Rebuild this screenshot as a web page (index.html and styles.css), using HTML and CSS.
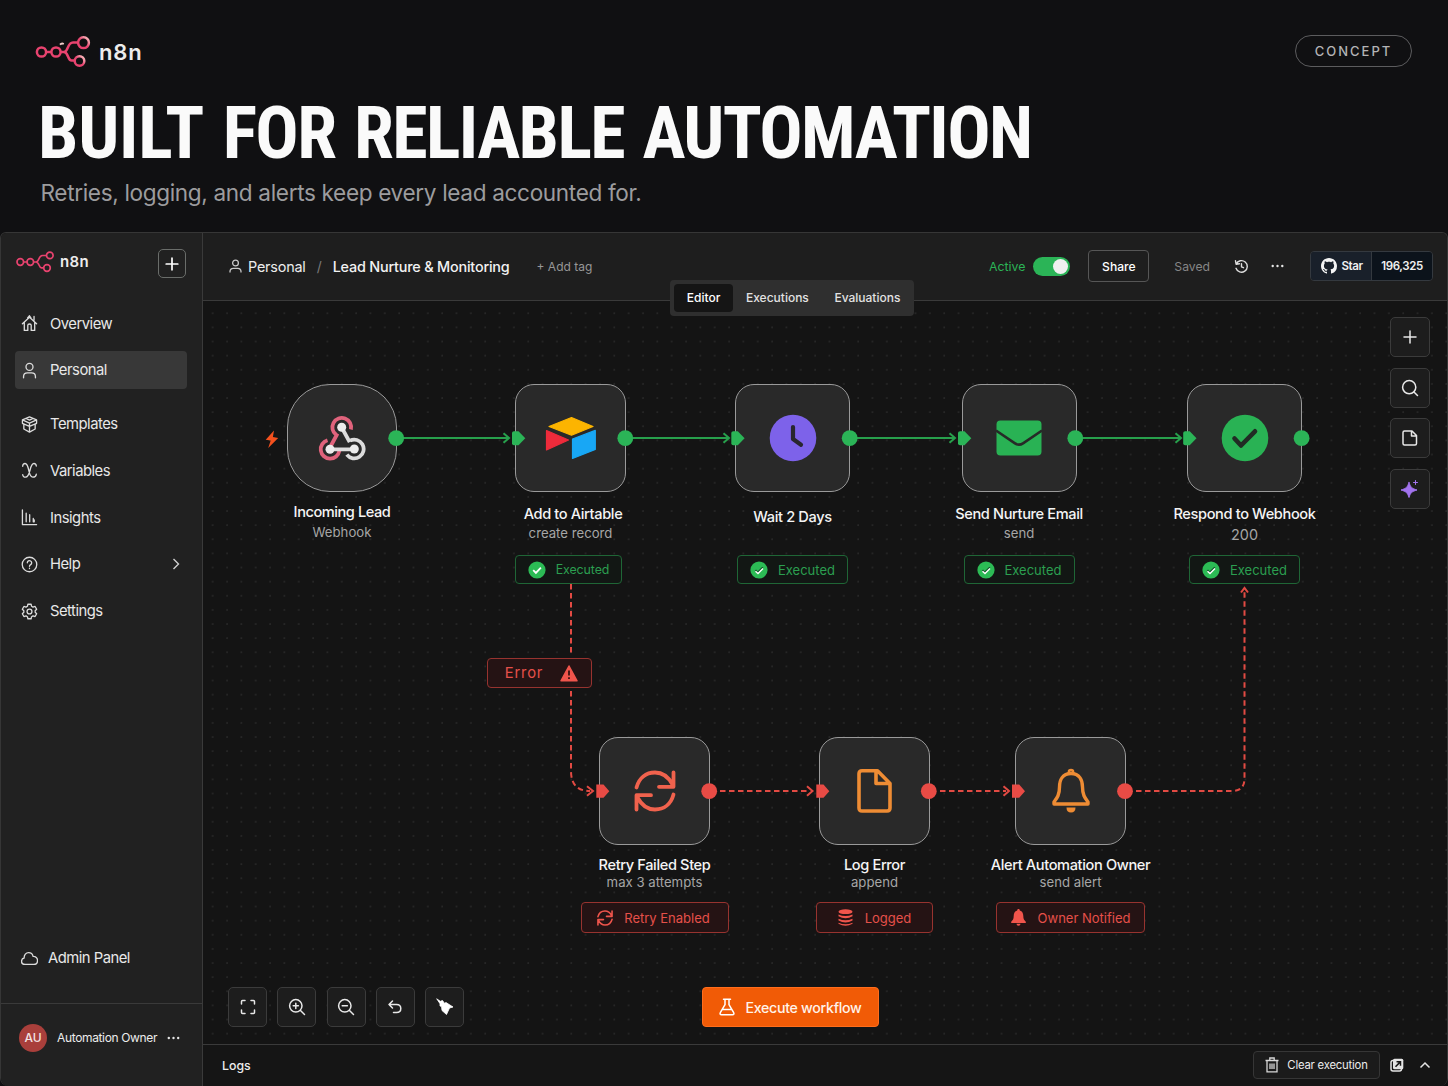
FILE: index.html
```html
<!DOCTYPE html>
<html lang="en">
<head>
    <meta charset="utf-8">
    <title>n8n - Lead Nurture &amp; Monitoring</title>
    <link rel="stylesheet" href="styles.css">
</head>
<body>
    <header class="hero">
        <div class="hero-top">
            <div class="brand brand-large">
                <svg width="58" height="32" viewBox="0 0 58 32" fill="none" stroke="#e8436f" stroke-width="2.5">
                    <defs>
                        <linearGradient id="fade" x1="0" y1="1" x2="1" y2="0">
                            <stop offset="0.5" stop-color="#e8436f"/>
                            <stop offset="1" stop-color="#ffd0cc"/>
                        </linearGradient>
                    </defs>
                    <circle cx="6.5" cy="16" r="4.6"/>
                    <circle cx="21" cy="16" r="4.6"/>
                    <path d="M11 16h5.5M25.500 16H29c4.500 0 3-9.500 9-9.500h5M29 16c4.500 0 3.500 8.500 7.500 8.500h3"/>
                    <circle cx="48.500" cy="6.700" r="5.400" stroke="url(#fade)"/>
                    <circle cx="44.500" cy="25" r="4.800" stroke="url(#fade)"/>
                    <path d="M25 8.700c1-1.200 2.500-1.400 3.800-.7" stroke="#f3cfcc" stroke-width="1.800"/>
                </svg>
                <span>n8n</span>
            </div>
            <span class="concept">CONCEPT</span>
        </div>
        <h1><span class="first-word">BUILT</span> FOR RELIABLE AUTOMATION</h1>
        <p>Retries, logging, and alerts keep every lead accounted for.</p>
    </header>

    <div class="app">
        <aside class="sidebar">
            <div class="sidebar-top">
                <div class="brand">
                    <svg width="38" height="22" viewBox="0 0 38 22" fill="none" stroke="#e8436f" stroke-width="1.700">
                        <circle cx="4.300" cy="11" r="3.300"/>
                        <circle cx="14.300" cy="11" r="3.300"/>
                        <path d="M7.600 11H11M17.600 11h2.400c3.500 0 2.200-6.500 6.500-6.500H30M20 11c3.500 0 2.500 5.800 5.500 5.800h2"/>
                        <circle cx="33.800" cy="4.400" r="3.300"/>
                        <circle cx="31" cy="17" r="3.300"/>
                    </svg>
                    <span>n8n</span>
                </div>
                <button class="add">
                    <svg width="14" height="14" viewBox="0 0 14 14" stroke="#fff" stroke-width="1.700" stroke-linecap="round"><path d="M7 1.200v11.600M1.200 7h11.600"/></svg>
                </button>
            </div>
            <nav class="menu">
                <a class="menu-item">
                    <svg class="icon" viewBox="0 0 18 18"><path d="M1.500 9.200 9 2.300l7.500 6.900M3.500 8v8.300h3.700v-5.500q0-1.300 1.800-1.300t1.800 1.300v5.500h3.700V8M13.800 5.500v-4M7 3l2-2.200L10.500 3"/></svg>
                    Overview
                </a>
                <a class="menu-item active">
                    <svg class="icon" viewBox="0 0 18 18"><circle cx="9" cy="5.200" r="3.700"/><path d="M2.700 16.800v-1.300c0-2.300 1.800-4 4.100-4h4.400c2.300 0 4.100 1.700 4.100 4v1.300"/></svg>
                    Personal
                </a>
                <a class="menu-item spaced">
                    <svg class="icon" viewBox="0 0 18 18"><path d="M9 1 1.500 4.200v3.600L3 8.600v5.200L9 17l6-3.200V8.600l1.500-.8V4.200zM1.500 4.200 9 7.500l7.500-3.300M1.500 7.800 9 11l7.500-3.200M9 7.500V17M5.300 2.600l3.700 1.700 3.700-1.700"/></svg>
                    Templates
                </a>
                <a class="menu-item">
                    <svg class="icon" viewBox="0 0 18 18"><path d="M1.800 4.500c0-1.800 1-2.900 2.500-2.900C9.300 1.600 7 16 12.500 16c1.900 0 3.400-1 3.700-3M16.200 4.200c0-1.600-1-2.600-2.500-2.600C8.700 1.600 10.500 16 4.800 16 3 16 1.800 15 1.800 13.300"/></svg>
                    Variables
                </a>
                <a class="menu-item">
                    <svg class="icon" viewBox="0 0 18 18"><path d="M1.500 1v15.500h15M5.500 4.500v9M9.200 6v7.500M13 10v3.500M14 11.500v2"/></svg>
                    Insights
                </a>
                <a class="menu-item">
                    <svg class="icon" viewBox="0 0 18 18"><circle cx="9" cy="9" r="7.700"/><path d="M6.700 7.200a2.300 2.300 0 1 1 3.500 2c-.8.5-1.200.9-1.200 1.700M9 12.900v.4"/></svg>
                    Help
                    <svg class="chevron" width="8" height="12" viewBox="0 0 8 12"><path d="m1.500 1 5 5-5 5"/></svg>
                </a>
                <a class="menu-item">
                    <svg class="icon" viewBox="0 0 18 18"><path d="M7.300 1.300h3.400l.5 2.200 1.500.9 2.200-.7 1.700 2.900L15 8.200v1.700l1.600 1.500-1.700 2.900-2.200-.7-1.500.9-.5 2.200H7.300l-.5-2.200-1.500-.9-2.200.7-1.700-2.900L3 9.900V8.200L1.400 6.600l1.700-2.900 2.200.7 1.500-.9z"/><circle cx="9" cy="9" r="2.600"/></svg>
                    Settings
                </a>
            </nav>
            <a class="menu-item admin">
                <svg class="icon" viewBox="0 0 18 18"><path d="M4.300 15.300C2.200 15.300.6 13.900.6 12S1.900 8.700 3.300 8.500C3.200 5 5.300 2.800 8 2.800c2.500 0 4.300 1.500 4.800 4 2.700-.1 4.700 1.600 4.700 4.300 0 2.500-1.600 4.200-4 4.200z"/></svg>
                Admin Panel
            </a>
            <div class="user">
                <span class="avatar">AU</span>
                <span class="user-name">Automation Owner</span>
                <svg width="13" height="4" viewBox="0 0 13 4" fill="#e6e6e6"><circle cx="1.800" cy="2" r="1.200"/><circle cx="6.500" cy="2" r="1.200"/><circle cx="11.200" cy="2" r="1.200"/></svg>
            </div>
        </aside>

        <main class="main">
            <div class="topbar">
                <div class="crumbs">
                    <svg width="13" height="14" viewBox="0 0 13 14" fill="none" stroke="#c8c8c8" stroke-width="1.300"><circle cx="6.500" cy="4" r="2.900"/><path d="M1 13.500v-1C1 10.600 2.500 9.300 4.300 9.300h4.400c1.800 0 3.300 1.300 3.300 3.200v1"/></svg>
                    <span class="crumb">Personal</span>
                    <span class="slash">/</span>
                    <span class="crumb current">Lead Nurture &amp; Monitoring</span>
                    <span class="add-tag">+ Add tag</span>
                </div>
                <div class="actions">
                    <span class="status">Active</span>
                    <span class="toggle"></span>
                    <button class="share">Share</button>
                    <span class="saved">Saved</span>
                    <svg class="history" width="15" height="15" viewBox="0 0 15 15" fill="none" stroke="#dedede" stroke-width="1.400" stroke-linecap="round" stroke-linejoin="round"><path d="M2.200 5A5.800 5.800 0 1 1 2 9.300M1.500 1.800l.6 3.400 3.400-.5M7.500 4.800v3l2 .9"/></svg>
                    <svg class="more" width="13" height="4" viewBox="0 0 13 4" fill="#e6e6e6"><circle cx="1.700" cy="2" r="1.200"/><circle cx="6.500" cy="2" r="1.200"/><circle cx="11.300" cy="2" r="1.200"/></svg>
                    <div class="github">
                        <span class="star">
                            <svg width="16" height="16" viewBox="0 0 16 16" fill="#f4f4f4"><path d="M8 0C3.580 0 0 3.580 0 8c0 3.540 2.290 6.530 5.470 7.590.4.070.550-.170.550-.380 0-.190-.010-.820-.010-1.490-2.010.370-2.530-.490-2.690-.940-.090-.230-.480-.940-.820-1.130-.280-.150-.680-.520-.010-.530.630-.010 1.080.580 1.230.820.720 1.210 1.870.870 2.330.660.070-.520.280-.870.510-1.070-1.780-.200-3.640-.890-3.640-3.950 0-.870.310-1.590.820-2.150-.080-.200-.360-1.020.080-2.120 0 0 .670-.210 2.200.820.640-.180 1.320-.270 2-.270s1.360.090 2 .270c1.530-1.040 2.200-.820 2.200-.820.440 1.100.160 1.920.080 2.120.510.560.820 1.270.820 2.150 0 3.070-1.870 3.750-3.650 3.950.290.250.540.730.540 1.480 0 1.070-.010 1.930-.010 2.200 0 .210.150.460.550.380A8.010 8.010 0 0 0 16 8c0-4.420-3.580-8-8-8z"/></svg>
                            Star
                        </span>
                        <span class="star-count">196,325</span>
                    </div>
                </div>
                <div class="tabs">
                    <span class="tab selected">Editor</span>
                    <span class="tab">Executions</span>
                    <span class="tab">Evaluations</span>
                </div>
            </div>

            <div class="canvas">
                <div class="node node-webhook">
                    <div class="node-box trigger">
                        <svg width="48" height="48" viewBox="0 0 48 48" fill="none" stroke-width="3.800">
                            <path stroke="#e0637c" d="M18.200 20.900A9.400 9.400 0 1 1 32.900 15.500M19.500 19.500 12.800 32M9.500 26.200A9.400 9.400 0 1 0 21.400 36.800"/>
                            <path stroke="#dcdcdc" d="M32 26.600a9.400 9.400 0 1 1-3.200 14.100M24 14l7.700 14.200M12 35.300h24.300"/>
                            <g fill="#ececec"><circle cx="23.700" cy="13.300" r="4.500"/><circle cx="12" cy="35.300" r="4.500"/><circle cx="36.300" cy="35" r="4.500"/></g>
                        </svg>
                    </div>
                    <div class="node-title">Incoming Lead</div>
                    <div class="node-sub">Webhook</div>
                </div>

                <div class="node node-airtable">
                    <div class="node-box">
                        <svg width="52" height="44" viewBox="0 0 52 44" stroke-linejoin="round" stroke-width="1.200">
                            <path fill="#fcb400" stroke="#fcb400" d="m4 10.500 22.500-9 21.500 9-21.500 8.700z"/>
                            <path fill="#ee2b3b" stroke="#ee2b3b" d="M1.500 14.500 23.500 24l-22 10z"/>
                            <path fill="#18a7f5" stroke="#18a7f5" d="M27.500 23 50.300 14.400v19L27.500 42.500z"/>
                        </svg>
                    </div>
                    <div class="node-title">Add to Airtable</div>
                    <div class="node-sub">create record</div>
                    <div class="badge badge-ok">
                        <svg width="18" height="18" viewBox="0 0 18 18"><circle cx="9" cy="9" r="8.600" fill="#2cbb55"/><path d="m5.200 9.200 2.700 2.700 5-5.200" fill="none" stroke="#fff" stroke-width="1.800"/></svg>
                        Executed
                    </div>
                </div>

                <div class="node node-wait">
                    <div class="node-box">
                        <svg width="48" height="48" viewBox="0 0 48 48"><circle cx="24" cy="24" r="23.300" fill="#7d62ea"/><path d="M24 13v12l8 5.700" fill="none" stroke="#29262f" stroke-width="4.200" stroke-linecap="round" stroke-linejoin="round"/></svg>
                    </div>
                    <div class="node-title">Wait 2 Days</div>
                    <div class="badge badge-ok">
                        <svg width="18" height="18" viewBox="0 0 18 18"><circle cx="9" cy="9" r="8.600" fill="#2cbb55"/><path d="m5.500 9 2 2.500 5.300-5.300" fill="none" stroke="#14502a" stroke-width="1.500"/><path d="m5.500 10.200 2.500 2.300 5-5" fill="none" stroke="#fff" stroke-width="1.400"/></svg>
                        Executed
                    </div>
                </div>

                <div class="node node-email">
                    <div class="node-box">
                        <svg width="46" height="36" viewBox="0 0 46 36"><rect x=".5" y=".5" width="45" height="35" rx="4" fill="#29b254"/><path d="m0 10.500 19 12.800q4 2.600 8 0L46 10.500" fill="none" stroke="#262a27" stroke-width="2.600"/></svg>
                    </div>
                    <div class="node-title">Send Nurture Email</div>
                    <div class="node-sub">send</div>
                    <div class="badge badge-ok">
                        <svg width="18" height="18" viewBox="0 0 18 18"><circle cx="9" cy="9" r="8.600" fill="#2cbb55"/><path d="m5.500 9 2 2.500 5.300-5.300" fill="none" stroke="#14502a" stroke-width="1.500"/><path d="m5.500 10.200 2.500 2.300 5-5" fill="none" stroke="#fff" stroke-width="1.400"/></svg>
                        Executed
                    </div>
                </div>

                <div class="node node-respond">
                    <div class="node-box">
                        <svg width="48" height="48" viewBox="0 0 48 48"><circle cx="24" cy="24" r="23.300" fill="#29b254"/><path d="m13.500 24.500 6.500 7L34 17.300" fill="none" stroke="#212b24" stroke-width="4.600" stroke-linecap="round" stroke-linejoin="round"/></svg>
                    </div>
                    <div class="node-title">Respond to Webhook</div>
                    <div class="node-sub code">200</div>
                    <div class="badge badge-ok">
                        <svg width="18" height="18" viewBox="0 0 18 18"><circle cx="9" cy="9" r="8.600" fill="#2cbb55"/><path d="m5.500 9 2 2.500 5.300-5.300" fill="none" stroke="#14502a" stroke-width="1.500"/><path d="m5.500 10.200 2.500 2.300 5-5" fill="none" stroke="#fff" stroke-width="1.400"/></svg>
                        Executed
                    </div>
                </div>

                <div class="node node-retry">
                    <div class="node-box">
                        <svg width="42" height="42" viewBox="0 0 42 42" fill="none" stroke="#f0624d" stroke-width="3.800" stroke-linecap="round" stroke-linejoin="round"><path d="M2.500 17.500C5 8 12 2.500 21 2.500c7.500 0 13.500 4.500 17.500 12M39.500 2.500v14.300H25M39.500 24.500C37 34 30 39.500 21 39.500c-7.500 0-13.500-4.500-17.500-12M2.500 39.500V25.200H17"/></svg>
                    </div>
                    <div class="node-title">Retry Failed Step</div>
                    <div class="node-sub">max 3 attempts</div>
                    <div class="badge badge-error">
                        <svg width="16" height="16" viewBox="0 0 42 42" fill="none" stroke="#f0554c" stroke-width="4.200" stroke-linecap="round" stroke-linejoin="round"><path d="M2.500 17.500C5 8 12 2.500 21 2.500c7.500 0 13.500 4.500 17.500 12M39.500 2.500v14.300H25M39.500 24.500C37 34 30 39.500 21 39.500c-7.500 0-13.500-4.500-17.500-12M2.500 39.500V25.200H17"/></svg>
                        Retry Enabled
                    </div>
                </div>

                <div class="node node-log">
                    <div class="node-box">
                        <svg width="36" height="46" viewBox="0 0 36 46" fill="none" stroke="#ee8c34" stroke-width="3.600" stroke-linejoin="round"><path d="M5 2.800h15.500L33 15.500V40q0 3-3 3H5q-3 0-3-3V5.800q0-3 3-3zM19 3v12.500h14"/></svg>
                    </div>
                    <div class="node-title">Log Error</div>
                    <div class="node-sub">append</div>
                    <div class="badge badge-error">
                        <svg width="15" height="17" viewBox="0 0 15 17" fill="#f0554c"><ellipse cx="7.500" cy="2.700" rx="7" ry="2.400"/><path d="M.5 5.600q7 3 14 0v1.700q-7 4-14 0zM.5 9.800q7 3 14 0v1.700q-7 4-14 0zM.5 13.800q7 3 14 0v1q-7 4-14 0z"/></svg>
                        Logged
                    </div>
                </div>

                <div class="node node-alert">
                    <div class="node-box">
                        <svg width="38" height="46" viewBox="0 0 38 46" fill="none" stroke="#ee8c34" stroke-width="3.400" stroke-linejoin="round"><path d="M19 5.500C10.500 5.500 7.500 12 7.500 19c0 8-2.500 11-5.500 15v2h34v-2c-3-4-5.500-7-5.500-15 0-7-3-13.500-11.500-13.500z"/><path d="M17 5V3.500q0-1.500 2-1.500t2 1.500V5" stroke-width="2.600"/><path d="M14.500 39.500h9q0 5-4.500 5t-4.500-5z" fill="#ee8c34" stroke="none"/></svg>
                    </div>
                    <div class="node-title">Alert Automation Owner</div>
                    <div class="node-sub">send alert</div>
                    <div class="badge badge-error">
                        <svg width="15" height="17" viewBox="0 0 15 17" fill="#f0554c"><path d="M7.500 0C6.700 0 6.200.6 6.200 1.400 3.700 2 2.700 4.200 2.700 7c0 3-.9 4.200-2.500 5.700V14h14.600v-1.300c-1.600-1.500-2.500-2.700-2.500-5.700 0-2.800-1-5-3.500-5.600C8.800.6 8.300 0 7.500 0zM5.500 14.800h4q0 2-2 2t-2-2z"/></svg>
                        Owner Notified
                    </div>
                </div>

                <div class="badge badge-error error-label">
                    Error
                    <svg width="18" height="17" viewBox="0 0 18 17"><path d="M9 1 17 15.800H1z" fill="#f0554c" stroke="#f0554c" stroke-width="1.500" stroke-linejoin="round"/><path d="M9 5.500v5M9 12.300v1.600" stroke="#3a1312" stroke-width="1.800"/></svg>
                </div>

                <!-- connections and ports -->
                <svg class="wires" viewBox="203 301 1245 743">
                    <path class="bolt" d="m274 430.500-8.300 9.200 5 .8-2.500 7.500 10-10-5.300-1z"/>
                    <g class="wire ok">
                        <path d="M402 438h106M503.500 433.200l5.500 4.800-5.500 4.800"/>
                        <path d="M632 438h96M723.500 433.200l5.500 4.800-5.500 4.800"/>
                        <path d="M856 438h98M949.500 433.200l5.500 4.800-5.500 4.800"/>
                        <path d="M1082 438h98M1175.500 433.200l5.500 4.800-5.500 4.800"/>
                    </g>
                    <g class="port-ok">
                        <circle cx="396.200" cy="438.200" r="7.900"/>
                        <circle cx="625.300" cy="438.200" r="7.900"/>
                        <circle cx="849.700" cy="438.200" r="7.900"/>
                        <circle cx="1075.300" cy="438.200" r="7.900"/>
                        <circle cx="1301.600" cy="438.200" r="7.900"/>
                        <path d="M512 433q0-1.800 2-1.800h4.500l6.800 7-6.800 7H514q-2 0-2-2z"/>
                        <path d="M731.300 433q0-1.800 2-1.800h4.500l6.800 7-6.800 7h-4.500q-2 0-2-2z"/>
                        <path d="M958 433q0-1.800 2-1.800h4.500l6.800 7-6.800 7H960q-2 0-2-2z"/>
                        <path d="M1183.200 433q0-1.800 2-1.800h4.500l6.800 7-6.800 7h-4.500q-2 0-2-2z"/>
                    </g>
                    <g class="wire error">
                        <path class="dashed" d="M571 584v72M571 691v80q0 20 19 20"/>
                        <path class="dashed" d="M720 791h90M940 791h66M1136 791h96q12.500 0 12.500-12.500V591"/>
                        <path d="m587 786.200 6 4.800-6 4.800M807 786.200l5.500 4.800-5.500 4.800M1003.500 786.200l5.500 4.800-5.500 4.800M1241 592.500l3.500-4.500 3.500 4.500"/>
                    </g>
                    <g class="port-error">
                        <circle cx="709.200" cy="791.200" r="7.900"/>
                        <circle cx="928.800" cy="791.200" r="7.900"/>
                        <circle cx="1125" cy="791.200" r="7.900"/>
                        <path d="M596.300 784.500h7.200l5.800 6.700-5.800 6.500h-7.200zM816.300 784.500h7.200l5.800 6.700-5.800 6.500h-7.200zM1012 784.500h7.200l5.800 6.700-5.800 6.500H1012z"/>
                    </g>
                </svg>

                <div class="tools side-tools">
                    <button class="tool"><svg width="16" height="16" viewBox="0 0 16 16"><path d="M8 2v12M2 8h12"/></svg></button>
                    <button class="tool"><svg width="18" height="18" viewBox="0 0 18 18"><circle cx="8.200" cy="8.200" r="6.600"/><path d="m13 13 3.500 3.500"/></svg></button>
                    <button class="tool"><svg width="16" height="16" viewBox="0 0 16 16"><path d="M2.500 1H10l4.500 4.500v8q0 1.500-1.500 1.500H2.500Q1 15 1 13.500v-11Q1 1 2.500 1zM9.500 1v5h5"/></svg></button>
                    <button class="tool"><svg width="18" height="18" viewBox="0 0 18 18"><path class="spark" d="M8 2.500c1.500 4.700 2.800 6 8 7.500-5.200 1.500-6.500 2.800-8 7.500C6.500 12.800 5.200 11.500 0 10c5.200-1.500 6.500-2.800 8-7.500zM14.500.5v4M12.500 2.500h4"/></svg></button>
                </div>

                <div class="tools bottom-tools">
                    <button class="tool"><svg width="16" height="16" viewBox="0 0 16 16"><path d="M1.500 5V2.500q0-1 1-1H5M11 1.500h2.500q1 0 1 1V5M14.500 11v2.500q0 1-1 1H11M5 14.500H2.500q-1 0-1-1V11"/></svg></button>
                    <button class="tool"><svg width="18" height="18" viewBox="0 0 18 18"><circle cx="7.800" cy="7.800" r="6.200"/><path d="m12.500 12.500 4 4M7.800 5.200v5.200M5.200 7.800h5.200"/></svg></button>
                    <button class="tool"><svg width="18" height="18" viewBox="0 0 18 18"><circle cx="7.800" cy="7.800" r="6.200"/><path d="m12.500 12.500 4 4M5.200 7.800h5.200"/></svg></button>
                    <button class="tool"><svg width="16" height="16" viewBox="0 0 16 16"><path d="M5.500 2 2 5.500 5.500 9M2 5.500h7.500q4.300 0 4.300 4t-4.300 4H6.500"/></svg></button>
                    <button class="tool"><svg width="18" height="18" viewBox="0 0 18 18"><path class="broom" d="m1 1 3.300 2.300 2.200-.8 2 2.800 1.500-.8 7 4.500-3.500 1-3 6.500-4.500-4-.5-4-1.500-.5L4 6z"/></svg></button>
                </div>

                <button class="execute">
                    <svg width="16" height="18" viewBox="0 0 16 18" fill="none" stroke="#fff" stroke-width="1.500" stroke-linejoin="round" stroke-linecap="round"><path d="M4.500 1.200h7M6 1.200v5.500l-4.700 8q-.9 2 1.200 2h11q2.100 0 1.200-2l-4.700-8V1.200M3.800 11.500h8.400"/></svg>
                    Execute workflow
                </button>
            </div>

            <footer class="logs">
                <span class="logs-title">Logs</span>
                <button class="clear">
                    <svg width="14" height="16" viewBox="0 0 14 16" fill="none" stroke="#d8d8d8" stroke-width="1.300"><path d="M.5 3.500h13M4.800 3.500V1h4.400v2.500M2 3.500v11.300h10V3.500M5 6.500v5.500M7 6.500v5.500M9 6.500v5.500"/></svg>
                    Clear execution
                </button>
                <svg class="popout" width="14" height="14" viewBox="0 0 14 14"><rect x="1" y="2.500" width="10.500" height="10.500" rx="2" fill="none" stroke="#e4e4e4" stroke-width="1.500"/><rect x="3" y=".7" width="10.300" height="10.500" rx="1.500" fill="#e4e4e4"/><path d="m5.500 8.700 4.800-4.800M6.500 3.700h4v4" fill="none" stroke="#181818" stroke-width="1.500"/></svg>
                <svg class="up" width="12" height="8" viewBox="0 0 12 8" fill="none" stroke="#e4e4e4" stroke-width="1.500"><path d="M1.500 6.500 6 2l4.500 4.500"/></svg>
            </footer>
        </main>
    </div>
</body>
</html>
```
FILE: styles.css
```css
* {
    box-sizing: border-box;
}

body {
    margin: 0;
    width: 1448px;
    height: 1086px;
    overflow: hidden;
    background-color: #101012;
    color: #ececec;
    font-family: Inter, "Liberation Sans", sans-serif;
}

button {
    margin: 0;
    padding: 0;
    font-family: inherit;
    color: inherit;
    cursor: pointer;
}

svg {
    display: block;
    flex: none;
}

/* hero */
.hero {
    height: 232px;
    padding: 35px 36px 0 35px;
}

.hero-top {
    display: flex;
    justify-content: space-between;
    align-items: center;
    height: 32px;
}

.brand {
    display: flex;
    align-items: center;
    gap: 6px;
    font-size: 15px;
    font-weight: 600;
    letter-spacing: 0.3px;
}

.brand-large {
    margin-top: 1px;
    font-size: 22px;
    letter-spacing: 0.8px;
}

.concept {
    width: 117px;
    height: 32px;
    border: 1px solid #5c5c5e;
    border-radius: 16px;
    color: #b4b4b6;
    font-size: 13px;
    font-weight: 500;
    line-height: 30px;
    letter-spacing: 2px;
    text-align: center;
}

h1 {
    margin: 25px 0 0 3px;
    font-family: Roboto, sans-serif;
    font-size: 72px;
    font-weight: 750;
    font-stretch: 75%;
    line-height: 84px;
    letter-spacing: -1.6px;
    word-spacing: 3.5px;
    color: #fafafa;
    white-space: nowrap;
}

.first-word {
    letter-spacing: -0.2px;
}

.hero p {
    margin: 3px 0 0 5.5px;
    font-size: 22.6px;
    line-height: 28px;
    letter-spacing: -0.35px;
    color: #9c9c9e;
}

/* app frame */
.app {
    display: flex;
    height: 854px;
    border: 1px solid #363636;
    border-bottom: none;
    border-radius: 6px 6px 8px 8px;
    overflow: hidden;
    background-color: #151515;
}

.sidebar {
    display: flex;
    flex-direction: column;
    width: 202px;
    flex: none;
    border-right: 1px solid #3a3a3a;
    background-color: #212121;
}

.sidebar-top {
    display: flex;
    justify-content: space-between;
    align-items: flex-start;
    height: 71.500px;
    padding: 16px 16px 0 15px;
}

.sidebar-top .brand {
    height: 25px;
}

.add {
    display: flex;
    align-items: center;
    justify-content: center;
    width: 28px;
    height: 29px;
    border: 1px solid #6a6d6a;
    border-radius: 5px;
    background: none;
}

.menu {
    display: flex;
    flex-direction: column;
    gap: 8.800px;
    padding: 0 15px 0 14px;
}

.menu-item {
    display: flex;
    align-items: center;
    gap: 12px;
    height: 38px;
    padding: 0 7px 0 6px;
    border-radius: 4px;
    font-size: 14.8px;
    letter-spacing: -0.5px;
    color: #e8e8e8;
}

.menu-item.active {
    background-color: #383838;
}

.menu-item.spaced {
    margin-top: 7px;
}

.icon {
    width: 17px;
    height: 17px;
    fill: none;
    stroke: #dcdcdc;
    stroke-width: 1.4;
    stroke-linecap: round;
    stroke-linejoin: round;
}

.chevron {
    margin-left: auto;
    fill: none;
    stroke: #d0d0d0;
    stroke-width: 1.4;
}

.admin {
    gap: 10px;
    margin: auto 14px 26px;
}

.user {
    display: flex;
    align-items: center;
    height: 83px;
    padding: 0 0 15px 18px;
    border-top: 1px solid #3a3a3a;
}

.avatar {
    width: 28px;
    height: 28px;
    border-radius: 50%;
    background-color: #a93f3b;
    color: #f3e4e4;
    font-size: 12px;
    font-weight: 500;
    line-height: 28px;
    text-align: center;
}

.user-name {
    margin: 0 10px;
    font-size: 12px;
    letter-spacing: -0.35px;
}

/* top bar */
.main {
    display: flex;
    flex-direction: column;
    flex: 1;
    min-width: 0;
}

.topbar {
    position: relative;
    z-index: 1;
    display: flex;
    justify-content: space-between;
    height: 68px;
    padding: 0 14px 0 26px;
    border-bottom: 1px solid #3a3a3a;
    background-color: #1e1e1e;
}

.crumbs,
.actions {
    display: flex;
    align-items: center;
    height: 66px;
    white-space: nowrap;
}

.crumb {
    margin-left: 6px;
    font-size: 14.4px;
    letter-spacing: -0.2px;
}

.slash {
    margin: 0 5px 0 11px;
    font-size: 14px;
    color: #7a7a7a;
}

.current {
    font-weight: 500;
    color: #f2f2f2;
}

.add-tag {
    margin-left: 27px;
    font-size: 12px;
    color: #979797;
}

.status {
    font-size: 12.3px;
    color: #2bb457;
}

.toggle {
    display: flex;
    justify-content: flex-end;
    width: 37px;
    height: 19px;
    margin: 0 18px 0 8px;
    padding: 2px;
    border-radius: 10px;
    background-color: #2bb457;
}

.toggle::after {
    content: "";
    width: 15px;
    height: 15px;
    border-radius: 50%;
    background-color: #f0f0f0;
}

.share {
    width: 61px;
    height: 32px;
    border: 1px solid #565656;
    border-radius: 4px;
    background: none;
    font-size: 12.1px;
    font-weight: 500;
    color: #fff;
}

.saved {
    margin-left: 25px;
    font-size: 12.2px;
    color: #868686;
}

.history {
    margin-left: 24px;
}

.more {
    margin-left: 22px;
}

.github {
    display: flex;
    width: 123px;
    height: 30px;
    margin-left: 26px;
    border: 1px solid #34393f;
    border-radius: 4px;
    overflow: hidden;
    font-size: 11.5px;
    font-weight: 600;
    letter-spacing: -0.4px;
    color: #f0f0f0;
}

.star {
    display: flex;
    align-items: center;
    justify-content: center;
    gap: 4px;
    width: 61px;
    padding-left: 2px;
    border-right: 1px solid #34393f;
    background-color: #19202a;
}

.star-count {
    flex: 1;
    background-color: #0c131b;
    line-height: 28px;
    text-align: center;
}

.tabs {
    position: absolute;
    left: 467px;
    top: 47px;
    display: flex;
    width: 244px;
    height: 36px;
    padding: 4px;
    border-radius: 4px;
    background-color: #2f2f2f;
}

.tab {
    padding: 0 12.8px;
    border-radius: 4px;
    font-size: 12px;
    font-weight: 500;
    line-height: 27px;
    color: #e2e2e2;
}

.tab.selected {
    background-color: #151515;
    color: #fff;
}

/* canvas */
.canvas {
    position: relative;
    flex: 1;
    background-color: #141414;
    background-image: radial-gradient(circle at 9.700px 12.300px, #282828 0.6px, transparent 1.1px);
    background-size: 14.350px 14.130px;
}

.node {
    position: absolute;
    top: 83px;
    display: flex;
    flex-direction: column;
    align-items: center;
    width: 111px;
    white-space: nowrap;
}

.node-box {
    display: flex;
    align-items: center;
    justify-content: center;
    width: 100%;
    height: 108px;
    flex: none;
    border: 1px solid #9a9a9a;
    border-radius: 19px;
    background-color: #292929;
}

.node-box.trigger {
    border-radius: 43px;
}

.node-title {
    margin-top: 13px;
    font-size: 14.6px;
    font-weight: 500;
    line-height: 18px;
    letter-spacing: -0.37px;
    color: #f4f4f4;
}

.node-sub {
    margin-top: 1px;
    font-size: 13.2px;
    line-height: 18px;
    color: #a6a6a6;
}

.node-webhook {
    left: 84px;
    width: 110px;
}

.node-webhook .node-title {
    margin-top: 11px;
    letter-spacing: -0.45px;
}

.node-webhook .node-sub {
    margin-top: 2px;
}

.node-airtable {
    left: 312px;
}

.node-airtable .node-title {
    padding-left: 5px;
}

.node-wait {
    left: 532px;
    width: 115px;
}

.node-wait .node-title {
    margin-top: 16px;
}

.node-email {
    left: 758.500px;
    width: 115px;
}

.node-respond {
    left: 984px;
    width: 115px;
}

.node-sub.code {
    margin-top: 3px;
    font-size: 14.4px;
}

.node-retry,
.node-log,
.node-alert {
    top: 436px;
}

.node-retry .node-title,
.node-log .node-title,
.node-alert .node-title {
    margin-top: 11px;
}

.node-retry .node-sub,
.node-log .node-sub,
.node-alert .node-sub {
    margin-top: -1px;
}

.node-retry {
    left: 396px;
}

.node-log {
    left: 616px;
}

.node-alert {
    left: 812px;
}

.badge {
    position: absolute;
    display: flex;
    align-items: center;
    justify-content: center;
    gap: 10px;
    border: 1px solid;
    border-radius: 4px;
    font-size: 13px;
}

.badge-ok {
    top: 171px;
    width: 111px;
    height: 29px;
    border-color: #1f6636;
    background-color: #121714;
    color: #2b9f50;
}

.node-airtable .badge {
    left: 0;
    width: 107px;
    font-size: 12.4px;
    letter-spacing: -0.1px;
}

.badge-error {
    top: 165px;
    height: 31px;
    border-color: #97332f;
    background-color: #251314;
    color: #e5504a;
}

.node-retry .badge {
    width: 148px;
    padding-right: 2px;
    gap: 11px;
}

.node-log .badge {
    width: 117px;
    gap: 12px;
}

.node-alert .badge {
    width: 149px;
    gap: 12px;
}

.badge-error.error-label {
    left: 284px;
    top: 357px;
    width: 105px;
    height: 30px;
    gap: 17px;
    padding-left: 4px;
    font-size: 14.8px;
    letter-spacing: 0.8px;
}

.wires {
    position: absolute;
    left: 0;
    top: 0;
    width: 1245px;
    height: 743px;
    pointer-events: none;
}

.wire {
    fill: none;
    stroke-width: 2;
}

.wire.ok {
    stroke: #27a04c;
}

.wire.error {
    stroke: #e24a43;
}

.dashed {
    stroke-dasharray: 5.500 3.500;
}

.port-ok {
    fill: #2bb457;
}

.port-error {
    fill: #e84b45;
}

.bolt {
    fill: #f4511e;
}

.tools {
    position: absolute;
    display: flex;
    gap: 10.300px;
}

.side-tools {
    right: 17px;
    top: 16px;
    flex-direction: column;
    gap: 10.500px;
}

.bottom-tools {
    left: 25px;
    top: 686px;
}

.tool {
    display: flex;
    align-items: center;
    justify-content: center;
    width: 39px;
    height: 40px;
    border: 1px solid #3b3b3b;
    border-radius: 5px;
    background-color: #1d1d1d;
}

.side-tools .tool {
    width: 40px;
}

.tool svg {
    fill: none;
    stroke: #e8e8e8;
    stroke-width: 1.5;
    stroke-linecap: round;
    stroke-linejoin: round;
}

.tool .spark {
    fill: #a273ee;
    stroke: #a273ee;
    stroke-width: 1;
}

.tool .broom {
    fill: #fff;
    stroke: #fff;
    stroke-width: 0.8;
}

.execute {
    position: absolute;
    left: 499px;
    top: 686px;
    display: flex;
    align-items: center;
    justify-content: center;
    gap: 10px;
    width: 177px;
    height: 40px;
    border: 1px solid #ff6d1c;
    border-radius: 4px;
    background-color: #f15b06;
    font-size: 14.2px;
    font-weight: 500;
    letter-spacing: -0.3px;
    color: #fff3ea;
}

/* logs bar */
.logs {
    display: flex;
    align-items: center;
    height: 42px;
    padding: 0 16px 1px 19px;
    border-top: 1px solid #3a3a3a;
    background-color: #151515;
}

.logs-title {
    margin-right: auto;
    font-size: 12.3px;
    font-weight: 500;
}

.clear {
    display: flex;
    align-items: center;
    justify-content: center;
    gap: 8px;
    width: 127px;
    height: 28px;
    border: 1px solid #363636;
    border-radius: 4px;
    background-color: #1b1b1b;
    font-size: 11.3px;
    letter-spacing: -0.2px;
}

.popout {
    margin-left: 10px;
}

.up {
    margin-left: 15px;
}
```
